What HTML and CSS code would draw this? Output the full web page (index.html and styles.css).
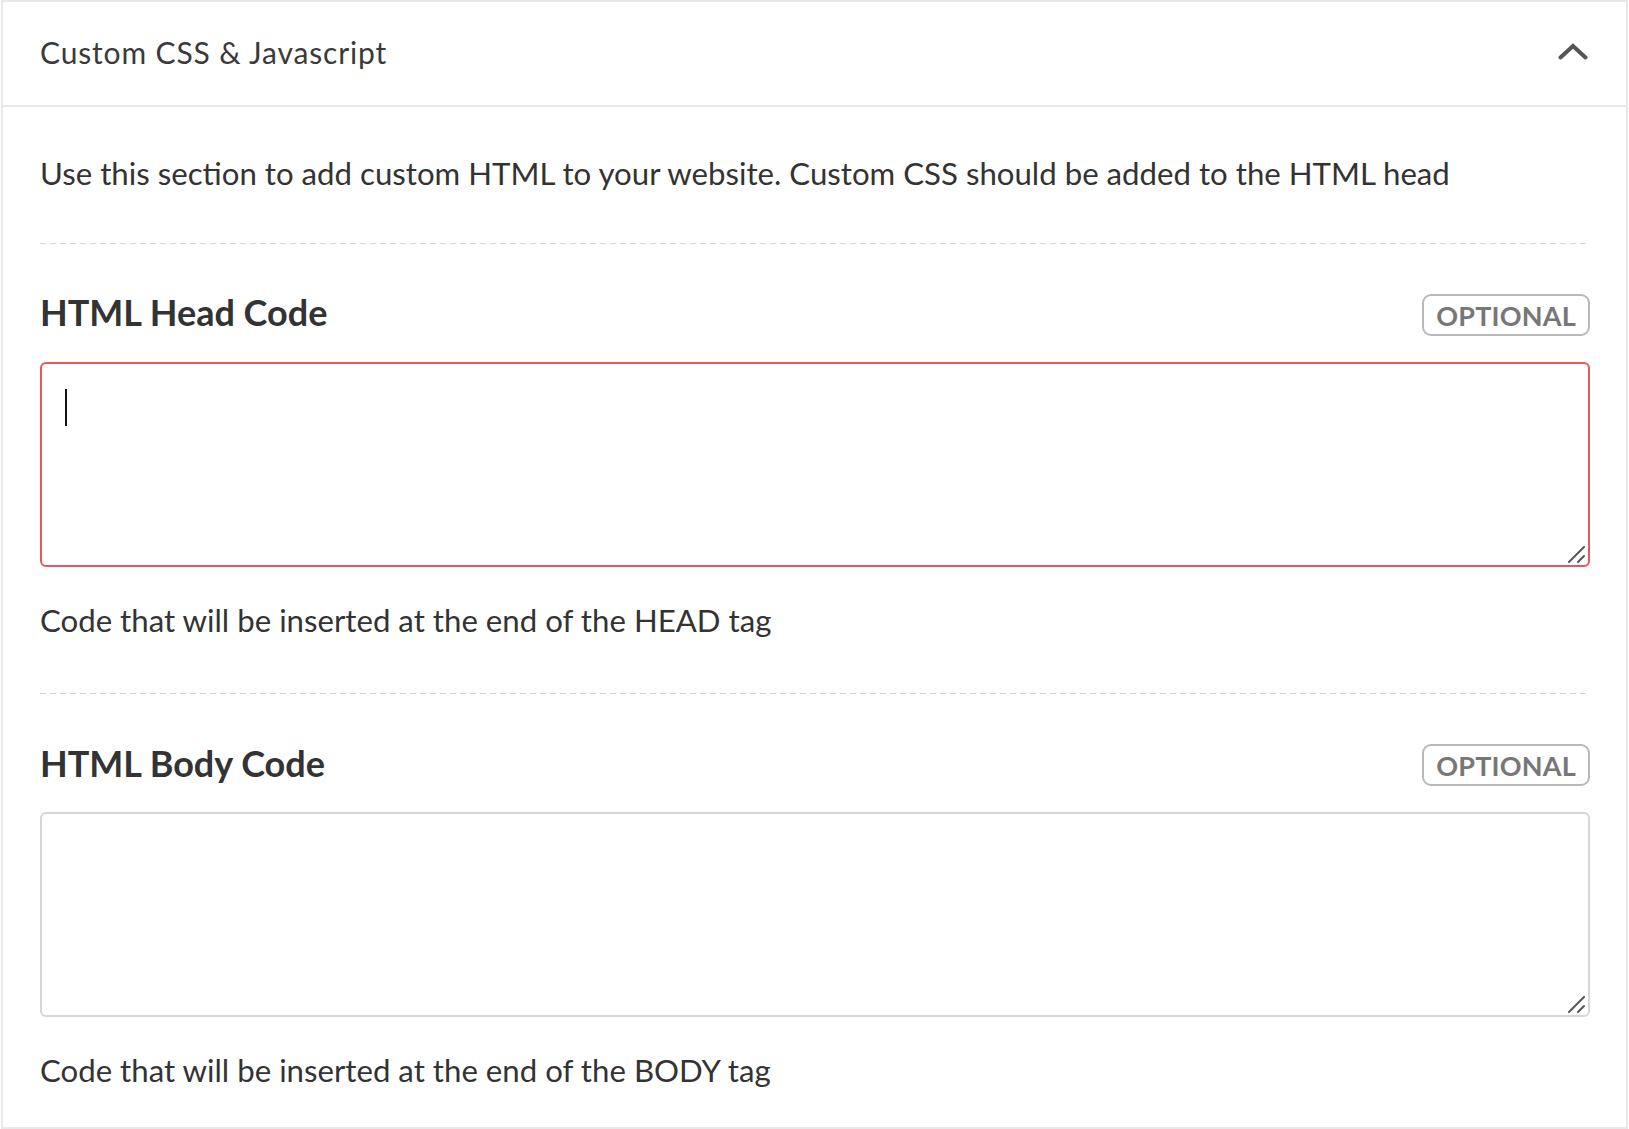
FILE: index.html
```html
<!DOCTYPE html>
<html lang="en">
<head>
<meta charset="utf-8">
<title>Custom CSS &amp; Javascript</title>
<link rel="stylesheet" href="styles.css">
</head>
<body>
<div class="card">
  <div class="card-header">
    <div class="card-title">Custom CSS &amp; Javascript</div>
    <svg class="chevron" width="30" height="17" viewBox="0 0 30 17" aria-hidden="true">
      <polyline points="2.5,14.5 15,3 27.5,14.5" fill="none" stroke="#555" stroke-width="4" stroke-linecap="round" stroke-linejoin="miter"/>
    </svg>
  </div>
  <div class="card-body">
    <p class="desc">Use this section to add custom HTML to your website. Custom CSS should be added to the HTML head</p>

    <div class="field">
      <div class="field-head">
        <label class="field-label" for="head-code">HTML Head Code</label>
        <span class="badge">OPTIONAL</span>
      </div>
      <div class="input-wrap">
        <textarea id="head-code" class="code-input code-input--focus"></textarea>
        <span class="caret"></span>
        <svg class="grip" width="17" height="17" viewBox="0 0 17 17" aria-hidden="true">
          <line x1="1" y1="16" x2="16" y2="1" stroke="#555" stroke-width="2" stroke-linecap="round"/>
          <line x1="10" y1="16" x2="16" y2="10" stroke="#555" stroke-width="2" stroke-linecap="round"/>
        </svg>
      </div>
      <p class="help">Code that will be inserted at the end of the HEAD tag</p>
    </div>

    <div class="field">
      <div class="field-head">
        <label class="field-label" for="body-code">HTML Body Code</label>
        <span class="badge">OPTIONAL</span>
      </div>
      <div class="input-wrap">
        <textarea id="body-code" class="code-input"></textarea>
        <svg class="grip" width="17" height="17" viewBox="0 0 17 17" aria-hidden="true">
          <line x1="1" y1="16" x2="16" y2="1" stroke="#555" stroke-width="2" stroke-linecap="round"/>
          <line x1="10" y1="16" x2="16" y2="10" stroke="#555" stroke-width="2" stroke-linecap="round"/>
        </svg>
      </div>
      <p class="help">Code that will be inserted at the end of the BODY tag</p>
    </div>
  </div>
</div>
</body>
</html>
```
FILE: styles.css
```css
html, body {
  margin: 0;
  padding: 0;
  background: #ffffff;
}

body {
  font-family: Lato, "Open Sans", "Liberation Sans", sans-serif;
  color: #333333;
}

.card {
  margin: 0 1px;
  border: 2px solid #e8e8e8;
  background: #ffffff;
}

.card-header {
  height: 103px;
  border-bottom: 2px solid #e8e8e8;
  padding: 0 38px 0 37px;
  display: flex;
  align-items: center;
  justify-content: space-between;
}

.card-title {
  font-size: 30px;
  line-height: 34px;
  letter-spacing: 0.85px;
  color: #3a3a3a;
  padding-bottom: 4px;
}

.chevron {
  display: block;
  margin-bottom: 4px;
}

.card-body {
  padding: 48px 36px 39px 37px;
}

.desc {
  margin: 0;
  font-size: 31.2px;
  line-height: 36px;
  color: #333333;
}

.field {
  margin-top: 52px;
  padding-top: 45px;
  background-image: repeating-linear-gradient(to right, #d4d4d4 0, #d4d4d4 6px, transparent 6px, transparent 10px);
  background-size: 100% 1px;
  background-repeat: no-repeat;
  background-position: top left;
}

.field + .field {
  margin-top: 55px;
}

.field-head {
  display: flex;
  justify-content: space-between;
  align-items: flex-end;
  height: 48px;
}

.field-label {
  font-size: 36px;
  line-height: 48px;
  font-weight: 700;
  color: #333333;
}

.field + .field .field-label {
  position: relative;
  top: 1px;
}

.badge {
  box-sizing: border-box;
  height: 42px;
  display: inline-flex;
  align-items: center;
  padding: 0 12px;
  border: 2px solid #b9b9b9;
  border-radius: 9px;
  font-size: 27px;
  font-weight: 700;
  color: #777777;
  letter-spacing: 0.2px;
}

.input-wrap {
  position: relative;
  margin-top: 26px;
}

.code-input {
  display: block;
  box-sizing: border-box;
  width: 100%;
  height: 205px;
  margin: 0;
  padding: 12px;
  border: 2px solid #d6d6d6;
  border-radius: 6px;
  background: #ffffff;
  font-family: "Liberation Mono", monospace;
  font-size: 16px;
  resize: none;
  outline: none;
}

.code-input--focus {
  border-color: #e8575c;
}

.caret {
  position: absolute;
  left: 25px;
  top: 27px;
  width: 2px;
  height: 37px;
  background: #111111;
}

.grip {
  position: absolute;
  right: 5px;
  bottom: 4px;
  display: block;
  pointer-events: none;
}

.help {
  margin: 35px 0 0;
  font-size: 31.2px;
  line-height: 36px;
  color: #333333;
}
```
